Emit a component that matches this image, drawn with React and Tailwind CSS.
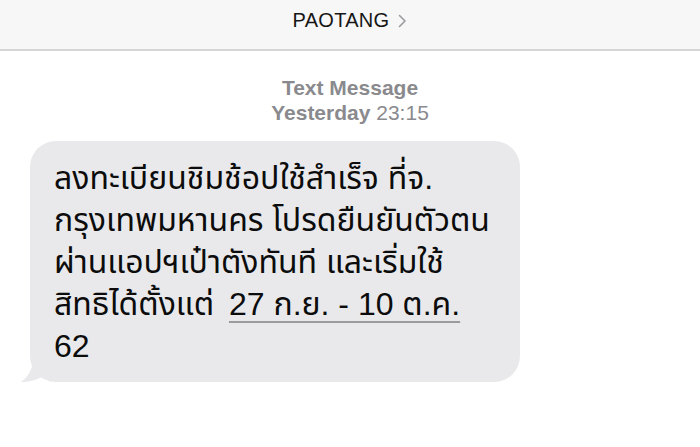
export default function App() {
  return (
    <div className="h-[447px] w-[700px] overflow-hidden bg-white font-['Liberation_Sans','Noto_Sans_Thai','Noto_Sans',sans-serif]">
      <header className="flex h-[51px] items-start justify-center border-b-2 border-[#d6d6d6] bg-[#f7f7f7] pt-[7px]">
        <span className="text-[20px] leading-[26px] text-[#161616] tracking-[0.3px]">PAOTANG</span>
        <svg className="ml-[9px] mt-[7px]" width="9" height="14" viewBox="0 0 9 14" fill="none">
          <path d="M1.5 1.5 L7 7 L1.5 12.5" stroke="#9a9a9f" strokeWidth="1.6" strokeLinecap="round" strokeLinejoin="round" />
        </svg>
      </header>

      <div className="mt-[24px] flex flex-col items-center text-[21px] leading-[25px] text-[#8a8a8e]">
        <span className="font-semibold">Text Message</span>
        <span>
          <span className="font-semibold">Yesterday</span> 23:15
        </span>
      </div>

      <div className="relative ml-[30px] mt-[16px] w-[490px]">
        <div className="rounded-[26px] bg-[#e9e9eb] px-[24px] pb-[15px] pt-[16px] text-[32px] leading-[42px] text-[#0c0c0c]">
          ลงทะเบียนชิมช้อปใช้สำเร็จ ที่จ.
          <br />
          กรุงเทพมหานคร โปรดยืนยันตัวตน
          <br />
          ผ่านแอปฯเป๋าตังทันที และเริ่มใช้
          <br />
          สิทธิได้ตั้งแต่{" "}
          <span className="ml-[6px] underline decoration-[#9a9a9f] decoration-2 underline-offset-[6px]">27 ก.ย. - 10 ต.ค.</span>
          <br />
          62
        </div>
        <svg className="absolute bottom-0 left-[-9px]" width="30" height="24" viewBox="0 0 30 24">
          <path d="M30 0 L12 0 C12 10 8 18 0 24 C8 24 16 22 22 18 C25 21 28 23 30 24 Z" fill="#e9e9eb" />
        </svg>
      </div>
    </div>
  );
}
